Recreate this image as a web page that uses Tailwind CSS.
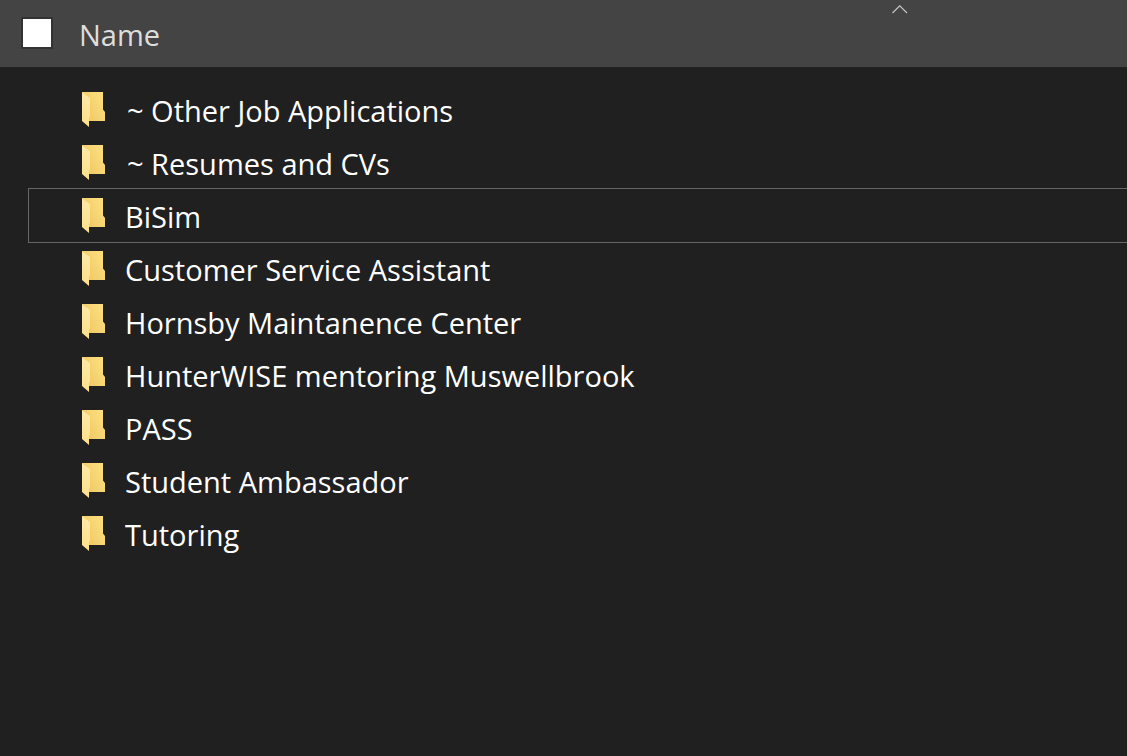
<!DOCTYPE html>
<html lang="en">
<head>
<meta charset="utf-8">
<meta name="viewport" content="width=device-width, initial-scale=1">
<title>Files</title>
<script src="https://cdn.jsdelivr.net/npm/@tailwindcss/browser@4"></script>
</head>
<body class="min-h-screen overflow-x-hidden bg-[#202020] font-['Open_Sans','Noto_Sans',sans-serif] text-[29px] text-white">
<svg class="absolute size-0" aria-hidden="true">
  <defs>
    <linearGradient id="back" x1="0" y1="0.8" x2="1" y2="0.2"><stop offset="0.2" stop-color="#f0cc68"/><stop offset="1" stop-color="#ffdf80"/></linearGradient>
    <linearGradient id="flap" x1="0" y1="0" x2="0" y2="1"><stop offset="0" stop-color="#ffe9a6"/><stop offset="1" stop-color="#ffe08a"/></linearGradient>
    <symbol id="folder" viewBox="0 0 23 35">
      <path fill="url(#back)" d="M0 0H21V17.5L23 20V29H0Z"/>
      <path fill="url(#flap)" d="M0 0.5L8 6V24.5L7 26V35L0 29Z"/>
    </symbol>
  </defs>
</svg>
<header class="flex h-[67px] bg-[#444444]">
  <input type="checkbox" aria-label="Select all items" class="mt-[17px] ml-[21px] size-8 shrink-0 appearance-none border-2 border-[#333333] bg-white">
  <button type="button" class="ml-[26px] flex flex-1 items-start justify-between pr-[219px] text-left text-[#dedede]">
    <span class="pt-[3px] leading-[64px]">Name</span>
    <svg class="mt-[5px] h-[9px] w-4" viewBox="0 0 16 9" fill="none" stroke="#c4c4c4" stroke-width="1.2" aria-hidden="true"><path d="M0.5 8L7.75 0.8L15 8"/></svg>
  </button>
</header>
<main class="pt-4 pl-[29px]">
  <ul class="leading-[53px]">
    <li><a href="#" class="flex h-[53px] pl-[53px]"><svg class="mt-[9px] h-[35px] w-[23px] shrink-0" aria-hidden="true"><use href="#folder"/></svg><span class="pt-px pl-[22px]">~ Other Job Applications</span></a></li>
    <li><a href="#" class="flex h-[53px] pl-[53px]"><svg class="mt-[9px] h-[35px] w-[23px] shrink-0" aria-hidden="true"><use href="#folder"/></svg><span class="pt-px pl-[22px]">~ Resumes and CVs</span></a></li>
    <li><a href="#" class="flex h-[53px] pl-[53px] outline outline-[#666666]"><svg class="mt-[9px] h-[35px] w-[23px] shrink-0" aria-hidden="true"><use href="#folder"/></svg><span class="pt-px pl-5">BiSim</span></a></li>
    <li><a href="#" class="flex h-[53px] pl-[53px]"><svg class="mt-[9px] h-[35px] w-[23px] shrink-0" aria-hidden="true"><use href="#folder"/></svg><span class="pt-px pl-5">Customer Service Assistant</span></a></li>
    <li><a href="#" class="flex h-[53px] pl-[53px]"><svg class="mt-[9px] h-[35px] w-[23px] shrink-0" aria-hidden="true"><use href="#folder"/></svg><span class="pt-px pl-5">Hornsby Maintanence Center</span></a></li>
    <li><a href="#" class="flex h-[53px] pl-[53px]"><svg class="mt-[9px] h-[35px] w-[23px] shrink-0" aria-hidden="true"><use href="#folder"/></svg><span class="pt-px pl-5">HunterWISE mentoring Muswellbrook</span></a></li>
    <li><a href="#" class="flex h-[53px] pl-[53px]"><svg class="mt-[9px] h-[35px] w-[23px] shrink-0" aria-hidden="true"><use href="#folder"/></svg><span class="pt-px pl-5">PASS</span></a></li>
    <li><a href="#" class="flex h-[53px] pl-[53px]"><svg class="mt-[9px] h-[35px] w-[23px] shrink-0" aria-hidden="true"><use href="#folder"/></svg><span class="pt-px pl-5">Student Ambassador</span></a></li>
    <li><a href="#" class="flex h-[53px] pl-[53px]"><svg class="mt-[9px] h-[35px] w-[23px] shrink-0" aria-hidden="true"><use href="#folder"/></svg><span class="pt-px pl-5">Tutoring</span></a></li>
  </ul>
</main>
</body>
</html>
